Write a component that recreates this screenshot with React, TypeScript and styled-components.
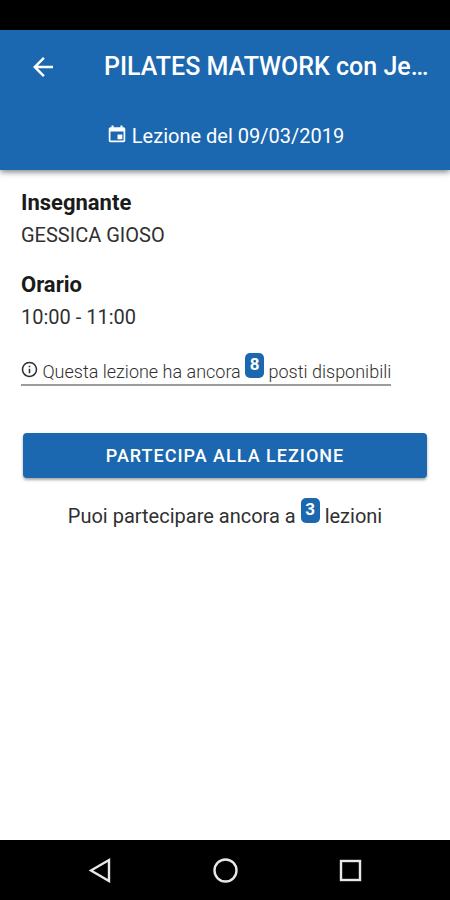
import React from 'react';
import styled, { createGlobalStyle } from 'styled-components';

const colors = {
  PRIMARY: '#1b67b0',
  HEADING: '#1a1a1a',
  TEXT: '#303030',
  LINE: '#9c9c9c',
  NAV_ICON: '#e8e8e8',
};

const lesson = {
  title: 'PILATES MATWORK con Je…',
  date: '09/03/2019',
  teacher: 'GESSICA GIOSO',
  time: '10:00 - 11:00',
  freePlaces: 8,
  remainingLessons: 3,
};

const ArrowIcon: React.FC = () => (
  <svg width="30" height="30" viewBox="0 0 24 24" fill="currentColor">
    <path d="M20 11H7.83l5.59-5.59L12 4l-8 8 8 8 1.41-1.41L7.83 13H20v-2z" />
  </svg>
);

const CalendarIcon: React.FC = () => (
  <svg width="22" height="22" viewBox="0 0 512 512" fill="currentColor">
    <path d="M380 268H268v108h112V268zM336 60v36H176V60h-48v36h-24c-22 0-40 18-40 40v272c0 22 18 40 40 40h304c22 0 40-18 40-40V136c0-22-18-40-40-40h-24V60h-48zm72 348H104V196h304v212z" />
  </svg>
);

const InfoIcon: React.FC = () => (
  <svg width="17" height="17" viewBox="1 1 22 22" fill="currentColor">
    <path d="M11 17h2v-6h-2v6zm1-15C6.48 2 2 6.48 2 12s4.48 10 10 10 10-4.48 10-10S17.52 2 12 2zm0 18c-4.41 0-8-3.59-8-8s3.59-8 8-8 8 3.59 8 8-3.59 8-8 8zM11 9h2V7h-2v2z" />
  </svg>
);

const App: React.FC = () => (
  <Page>
    <GlobalStyle />
    <StatusBar />
    <Header>
      <Toolbar>
        <BackButton type="button" aria-label="Indietro">
          <ArrowIcon />
        </BackButton>
        <Title>{lesson.title}</Title>
      </Toolbar>
      <LessonDate>
        <CalendarIcon />
        <span>Lezione del {lesson.date}</span>
      </LessonDate>
    </Header>
    <Content>
      <Details>
        <Field>
          <Label>Insegnante</Label>
          <Value>{lesson.teacher}</Value>
        </Field>
        <Field>
          <Label>Orario</Label>
          <Value>{lesson.time}</Value>
        </Field>
      </Details>
      <Places>
        <InfoIcon /> Questa lezione ha ancora <Badge>{lesson.freePlaces}</Badge>{' '}
        posti disponibili
      </Places>
      <JoinButton type="button">Partecipa alla lezione</JoinButton>
      <Remaining>
        Puoi partecipare ancora a <Badge>{lesson.remainingLessons}</Badge> lezioni
      </Remaining>
    </Content>
    <NavBar>
      <NavButton type="button" aria-label="Back">
        <svg width="26" height="26" viewBox="0 0 26 26">
          <path d="M22 3v21L4 13.5z" />
        </svg>
      </NavButton>
      <NavButton type="button" aria-label="Home">
        <svg width="26" height="26" viewBox="0 0 26 26">
          <circle cx="13.5" cy="13.5" r="11" />
        </svg>
      </NavButton>
      <NavButton type="button" aria-label="Recents">
        <svg width="26" height="26" viewBox="0 0 26 26">
          <rect x="4" y="4" width="19" height="19" />
        </svg>
      </NavButton>
    </NavBar>
  </Page>
);

const GlobalStyle = createGlobalStyle`
  * {
    box-sizing: border-box;
  }

  body {
    margin: 0;
    background: #fff;
    color: ${colors.TEXT};
    font-family: Roboto, 'Liberation Sans', sans-serif;
  }
`;

const Page = styled.div`
  display: flex;
  flex-direction: column;
  min-height: 100vh;
`;

const StatusBar = styled.div`
  height: 30px;
  background: #000;
`;

const Header = styled.header`
  background: ${colors.PRIMARY};
  color: #fff;
  box-shadow: 0 2px 6px rgba(0, 0, 0, 0.5);
`;

const Toolbar = styled.div`
  display: flex;
  align-items: center;
  gap: 46px;
  height: 74px;
  padding: 0 20px 0 28px;
`;

const BackButton = styled.button`
  display: flex;
  flex-shrink: 0;
  padding: 0;
  border: 0;
  background: none;
  color: inherit;
`;

const Title = styled.h1`
  min-width: 0;
  margin: 0;
  overflow: hidden;
  font-size: 25px;
  font-weight: 500;
  line-height: 32px;
  text-overflow: ellipsis;
  white-space: nowrap;
`;

const LessonDate = styled.div`
  display: flex;
  align-items: flex-start;
  justify-content: center;
  gap: 4px;
  height: 66px;
  padding-top: 19px;
  font-size: 20px;
  line-height: 26px;
`;

const Content = styled.main`
  flex: 1;
  padding: 17px 21px;
`;

const Details = styled.dl`
  display: grid;
  gap: 18px;
  margin: 0;
`;

const Field = styled.div`
  line-height: 32px;
`;

const Label = styled.dt`
  color: ${colors.HEADING};
  font-size: 22px;
  font-weight: 700;
`;

const Value = styled.dd`
  margin: 0;
  font-size: 20px;
`;

// raised above the text baseline, like a superscript
const Badge = styled.span`
  display: inline-block;
  min-width: 19px;
  height: 25px;
  padding: 0 4px;
  border-radius: 5px;
  background: ${colors.PRIMARY};
  color: #fff;
  font-size: 17px;
  font-weight: 700;
  line-height: 23px;
  text-align: center;
  vertical-align: 8px;
`;

const Places = styled.p`
  width: fit-content;
  margin: 20px 0 0;
  border-bottom: 2px solid ${colors.LINE};
  font-size: 18px;
  font-weight: 300;
  line-height: 24px;
`;

const JoinButton = styled.button`
  display: block;
  width: calc(100% - 4px);
  height: 45px;
  margin: 47px 2px 0;
  border: 0;
  border-radius: 4px;
  background: ${colors.PRIMARY};
  box-shadow: 0 2px 3px rgba(0, 0, 0, 0.35);
  color: #fff;
  font-family: inherit;
  font-size: 18px;
  font-weight: 500;
  letter-spacing: 1px;
  text-transform: uppercase;
`;

const Remaining = styled.p`
  margin: 20px 0 0;
  font-size: 20px;
  line-height: 24px;
  text-align: center;
`;

const NavBar = styled.nav`
  display: flex;
  align-items: center;
  justify-content: center;
  gap: 99px;
  height: 60px;
  background: #000;
`;

const NavButton = styled.button`
  display: flex;
  padding: 0;
  border: 0;
  background: none;

  svg {
    fill: none;
    stroke: ${colors.NAV_ICON};
    stroke-width: 2.4;
  }
`;

export default App;
